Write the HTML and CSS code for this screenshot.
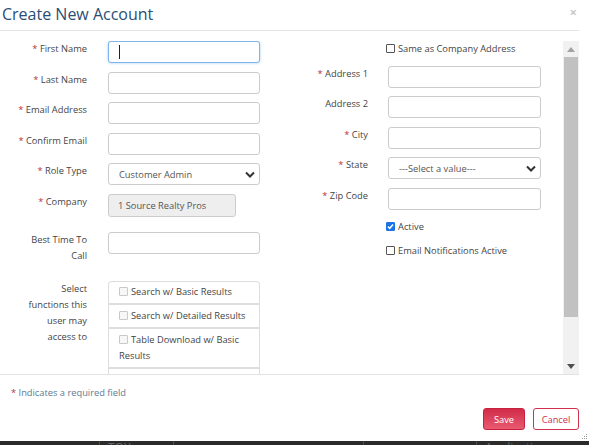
FILE: index.html
```html
<!DOCTYPE html>
<html>
<head>
  <link rel="stylesheet" href="styles.css">
</head>
<body>
<div class="modal">
  <div class="modal-header">
    <h2 class="modal-title">Create New Account</h2>
    <span class="close">&times;</span>
  </div>

  <div class="modal-body">
    <div class="scroll-area">
      <div class="form">
        <!-- Personal details -->
        <div class="col col-left">
          <div class="field">
            <label><span class="req">*</span> First Name</label>
            <div class="input focused"><span class="caret"></span></div>
          </div>
          <div class="field">
            <label><span class="req">*</span> Last Name</label>
            <div class="input"></div>
          </div>
          <div class="field">
            <label><span class="req">*</span> Email Address</label>
            <div class="input"></div>
          </div>
          <div class="field">
            <label><span class="req">*</span> Confirm Email</label>
            <div class="input"></div>
          </div>
          <div class="field">
            <label><span class="req">*</span> Role Type</label>
            <div class="input select">
              <span>Customer Admin</span>
              <svg width="10" height="7" viewBox="0 0 10 7"><path d="M1 1.5 L5 5.5 L9 1.5" fill="none" stroke="#333" stroke-width="2"/></svg>
            </div>
          </div>
          <div class="field">
            <label><span class="req">*</span> Company</label>
            <div class="input disabled">1 Source Realty Pros</div>
          </div>
          <div class="field field-time">
            <label>Best Time To Call</label>
            <div class="input"></div>
          </div>
          <div class="field field-functions">
            <label>Select functions this user may access to</label>
            <ul class="functions">
              <li><span class="box light"></span>Search w/ Basic Results</li>
              <li><span class="box light"></span>Search w/ Detailed Results</li>
              <li><span class="box light"></span>Table Download w/ Basic Results</li>
              <li><span class="box light"></span>Table Download w/ Detailed Results</li>
            </ul>
          </div>
        </div>

        <!-- Address details -->
        <div class="col col-right">
          <div class="field">
            <label></label>
            <div class="check"><span class="box"></span>Same as Company Address</div>
          </div>
          <div class="field">
            <label><span class="req">*</span> Address 1</label>
            <div class="input"></div>
          </div>
          <div class="field">
            <label>Address 2</label>
            <div class="input"></div>
          </div>
          <div class="field">
            <label><span class="req">*</span> City</label>
            <div class="input"></div>
          </div>
          <div class="field">
            <label><span class="req">*</span> State</label>
            <div class="input select">
              <span>---Select a value---</span>
              <svg width="10" height="7" viewBox="0 0 10 7"><path d="M1 1.5 L5 5.5 L9 1.5" fill="none" stroke="#333" stroke-width="2"/></svg>
            </div>
          </div>
          <div class="field">
            <label><span class="req">*</span> Zip Code</label>
            <div class="input"></div>
          </div>
          <div class="field">
            <label></label>
            <div class="check">
              <span class="box checked"><svg width="9" height="9" viewBox="0 0 9 9"><path d="M2 4.6 L3.8 6.3 L7 2.6" fill="none" stroke="#fff" stroke-width="1.5"/></svg></span>Active
            </div>
          </div>
          <div class="field">
            <label></label>
            <div class="check"><span class="box"></span>Email Notifications Active</div>
          </div>
        </div>
      </div>

      <div class="scrollbar">
        <div class="sb-btn"><svg width="8" height="5" viewBox="0 0 8 5"><path d="M0 5 L4 0 L8 5 Z" fill="#a3a3a3"/></svg></div>
        <div class="sb-thumb"></div>
        <div class="sb-track"></div>
        <div class="sb-btn"><svg width="8" height="5" viewBox="0 0 8 5"><path d="M0 0 L8 0 L4 5 Z" fill="#505050"/></svg></div>
      </div>
    </div>
  </div>

  <div class="modal-footer">
    <p class="required-note"><span class="req">*</span> Indicates a required field</p>
    <div class="buttons">
      <button class="btn btn-save">Save</button>
      <button class="btn btn-cancel">Cancel</button>
    </div>
  </div>

  <svg class="grip" width="7" height="7" viewBox="0 0 7 7">
    <rect x="5" y="1" width="1" height="1" fill="#999"/>
    <rect x="3" y="3" width="1" height="1" fill="#999"/>
    <rect x="5" y="3" width="1" height="1" fill="#999"/>
    <rect x="1" y="5" width="1" height="1" fill="#999"/>
    <rect x="3" y="5" width="1" height="1" fill="#999"/>
    <rect x="5" y="5" width="1" height="1" fill="#999"/>
  </svg>
</div>

<!-- table of the page under the dialog -->
<div class="page-behind">
  <div class="cell c1"></div>
  <div class="cell c2">TOY</div>
  <div class="cell c3"></div>
  <div class="cell c4"></div>
  <div class="cell c5">Application Submitted</div>
</div>
</body>
</html>
```

FILE: styles.css
```css
* {
  margin: 0;
  padding: 0;
  box-sizing: border-box;
}

body {
  width: 589px;
  height: 445px;
  overflow: hidden;
  background: #fff;
  font-family: "Open Sans", "Liberation Sans", sans-serif;
  font-size: 9.3px;
  color: #444;
}

/* Dialog box */
.modal {
  position: relative;
  height: 441px;
  background: #fff;
  display: flex;
  flex-direction: column;
}

.modal-header {
  width: 579px;
  height: 31px;
  border-bottom: 1px solid #e3e3e3;
  display: flex;
  justify-content: space-between;
  align-items: flex-start;
}

.modal-title {
  font-size: 16px;
  font-weight: normal;
  line-height: 29px;
  padding-left: 2px;
  color: #2a4e74;
}

.close {
  font-size: 13px;
  line-height: 24px;
  color: #c8c8c8;
  font-weight: bold;
  margin-right: 2px;
}

.modal-body {
  padding-top: 10px;
}

.scroll-area {
  width: 579px;
  height: 333px;
  display: flex;
}

.form {
  flex: 1;
  display: flex;
  overflow: hidden;
}

.col {
  display: flex;
  flex-direction: column;
  gap: 8.6px;
}

.field {
  display: flex;
  align-items: flex-start;
}

.field label {
  line-height: 16px;
  text-align: right;
  color: #444;
  flex-shrink: 0;
}

.col-left .field label {
  width: 87px;
  margin-right: 21px;
}

.col-right .field label {
  width: 108px;
  margin-right: 20px;
}

.req {
  color: #b5323e;
}

.input {
  height: 22px;
  border: 1px solid #ccc;
  border-radius: 3px;
  background: #fff;
  padding: 0 10px;
  display: flex;
  align-items: center;
  color: #555;
}

.col-left .input {
  width: 152px;
}

.col-right .input {
  width: 153px;
}

.input.focused {
  border-color: #7eb4ea;
  box-shadow: 0 0 3px rgba(102, 175, 233, 0.6);
}

.caret {
  width: 1px;
  height: 14px;
  background: #222;
}

.input.select {
  justify-content: space-between;
  padding-right: 4px;
}

.input.disabled {
  width: 128px !important;
  height: 23px;
  background: #eee;
  padding-left: 9px;
}

.field-time {
  margin-top: 6px;
}

.field-time label {
  padding-left: 20px;
}

.field-functions {
  margin-top: 9px;
}

.field-functions label {
  padding-left: 24px;
}

/* List of functions */
.functions {
  list-style: none;
  width: 152px;
  border: 1px solid #ddd;
  border-radius: 3px 3px 0 0;
}

.functions li {
  padding: 3px 10px 3px 10px;
  line-height: 16px;
  border-bottom: 2px solid #dedede;
}

.functions li:first-child {
  padding-top: 2px;
}

/* Checkboxes */
.box {
  display: inline-block;
  width: 9px;
  height: 9px;
  border: 1px solid #555;
  border-radius: 1px;
  margin-right: 3px;
  vertical-align: -1px;
  background: #fff;
}

.box.light {
  border-color: #c9c9c9;
  background: #f7f7f7;
}

.box.checked {
  border-color: #1b73e8;
  background: #1b73e8;
}

.box.checked svg {
  display: block;
  margin: -1px 0 0 -1px;
}

.check {
  line-height: 16px;
  color: #444;
  margin-left: -2px;
}

/* Scrollbar drawn beside the form */
.scrollbar {
  width: 16px;
  background: #f1f1f1;
  display: flex;
  flex-direction: column;
}

.sb-btn {
  height: 16px;
  display: flex;
  align-items: center;
  justify-content: center;
}

.sb-thumb {
  height: 260px;
  margin: 0 1px;
  background: #c1c1c1;
}

.sb-track {
  flex: 1;
}

/* Footer */
.modal-footer {
  width: 579px;
  border-top: 1px solid #e3e3e3;
  padding: 10px 0 0 11px;
}

.required-note {
  line-height: 16px;
  color: #5d7a92;
}

.buttons {
  display: flex;
  justify-content: flex-end;
  gap: 8px;
  margin-top: 7px;
}

.btn {
  height: 22px;
  border-radius: 3px;
  font-family: "Open Sans", "Liberation Sans", sans-serif;
  font-size: 9.3px;
  padding: 0 6px;
  cursor: pointer;
}

.btn-save {
  width: 42px;
  color: #fff;
  border: 1px solid #c8213f;
  background: linear-gradient(#d22c4b, #e85a70);
}

.btn-cancel {
  width: 46px;
  color: #d0314d;
  border: 1px solid #d0314d;
  background: #fff;
}

.grip {
  position: absolute;
  right: 1px;
  bottom: 1px;
}

/* Table of the page beneath */
.page-behind {
  height: 4px;
  background: #2b2b2b;
  display: flex;
  overflow: hidden;
}

.cell {
  border-right: 1px solid #4a4a4a;
  color: #666;
  font-size: 12px;
  line-height: 12px;
  padding-left: 8px;
  padding-top: 1px;
  overflow: hidden;
}

.c1 { width: 100px; }
.c2 { width: 74px; }
.c3 { width: 190px; }
.c4 { width: 113px; }
.c5 { flex: 1; border-right: none; }
```
